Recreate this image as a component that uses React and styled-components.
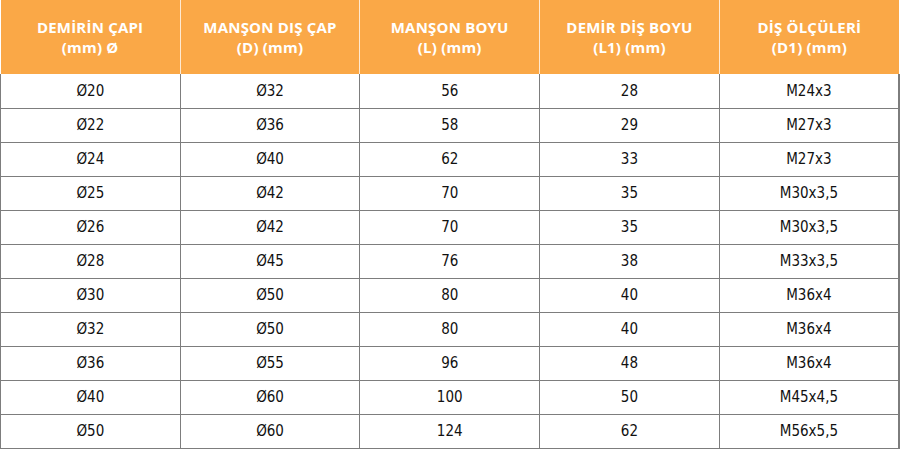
import React from "react";
import styled, { createGlobalStyle } from "styled-components";

const GlobalStyle = createGlobalStyle`
  html, body {
    margin: 0;
    padding: 0;
    background: #ffffff;
  }
`;

const COLORS = {
  orange: "#faa847",
  line: "#7d7d7d",
  text: "#111111",
};

const rows = [
  ["Ø20", "Ø32", "56", "28", "M24x3"],
  ["Ø22", "Ø36", "58", "29", "M27x3"],
  ["Ø24", "Ø40", "62", "33", "M27x3"],
  ["Ø25", "Ø42", "70", "35", "M30x3,5"],
  ["Ø26", "Ø42", "70", "35", "M30x3,5"],
  ["Ø28", "Ø45", "76", "38", "M33x3,5"],
  ["Ø30", "Ø50", "80", "40", "M36x4"],
  ["Ø32", "Ø50", "80", "40", "M36x4"],
  ["Ø36", "Ø55", "96", "48", "M36x4"],
  ["Ø40", "Ø60", "100", "50", "M45x4,5"],
  ["Ø50", "Ø60", "124", "62", "M56x5,5"],
];

const headers = [
  ["DEMİRİN ÇAPI", "(mm) Ø"],
  ["MANŞON DIŞ ÇAP", "(D) (mm)"],
  ["MANŞON BOYU", "(L) (mm)"],
  ["DEMİR DİŞ BOYU", "(L1) (mm)"],
  ["DİŞ ÖLÇÜLERİ", "(D1) (mm)"],
];

const Table = styled.table`
  width: 900px;
  border-collapse: collapse;
  table-layout: fixed;
  font-family: "Open Sans", "Liberation Sans", sans-serif;
`;

const HeadCell = styled.th`
  height: 74px;
  padding: 0;
  background: ${COLORS.orange};
  color: #ffffff;
  font-size: 15px;
  font-weight: 700;
  line-height: 20px;
  letter-spacing: 0.2px;
  text-align: center;
  vertical-align: middle;
  border-left: 1px solid rgba(255, 255, 255, 0.75);
  &:first-child {
    border-left: none;
  }
  span {
    display: block;
  }
`;

const Row = styled.tr`
  height: 34px;
`;

const Cell = styled.td`
  padding: 0;
  height: 33px;
  border: 1px solid ${COLORS.line};
  border-top: none;
  color: ${COLORS.text};
  font-family: "DejaVu Sans Condensed", "DejaVu Sans", sans-serif;
  font-size: 15px;
  text-align: center;
  vertical-align: middle;
  &:last-child {
    border-right: 2px solid ${COLORS.line};
  }
`;

const App = () => {
  return (
    <>
      <GlobalStyle />
      <Table>
        <thead>
          <tr>
            {headers.map((h, i) => (
              <HeadCell key={i}>
                <span>{h[0]}</span>
                <span>{h[1]}</span>
              </HeadCell>
            ))}
          </tr>
        </thead>
        <tbody>
          {rows.map((row, i) => (
            <Row key={i}>
              {row.map((v, j) => (
                <Cell key={j}>{v}</Cell>
              ))}
            </Row>
          ))}
        </tbody>
      </Table>
    </>
  );
};

export default App;
